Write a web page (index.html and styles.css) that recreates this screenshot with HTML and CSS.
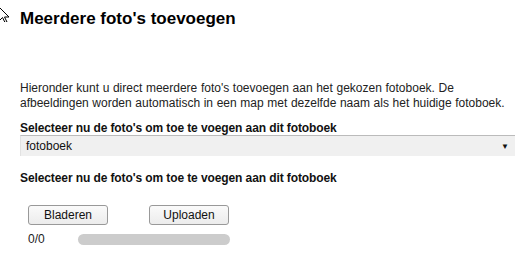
FILE: index.html
```html
<!DOCTYPE html>
<html>
<head>
<meta charset="utf-8">
<link rel="stylesheet" href="styles.css">
</head>
<body>
<svg class="cursor" width="12" height="18" viewBox="0 0 12 18"><path d="M-3 1 L9 13 L4.5 13 L7 18 L5 18.5 L2.5 13.5 L-1 17" fill="#fff" stroke="#000" stroke-width="1"/></svg>
<div class="page">
  <h1 class="title">Meerdere foto's toevoegen</h1>
  <p class="intro">Hieronder kunt u direct meerdere foto's toevoegen aan het gekozen fotoboek. De afbeeldingen worden automatisch in een map met dezelfde naam als het huidige fotoboek.</p>
  <div class="label">Selecteer nu de foto's om toe te voegen aan dit fotoboek</div>
  <div class="select"><span>fotoboek</span><span class="arrow">&#9660;</span></div>
  <div class="label second">Selecteer nu de foto's om toe te voegen aan dit fotoboek</div>
  <div class="buttons">
    <button class="btn">Bladeren</button>
    <button class="btn">Uploaden</button>
  </div>
  <div class="progress-row">
    <span class="count">0/0</span>
    <div class="bar"></div>
  </div>
</div>
</body>
</html>
```
FILE: styles.css
```css
html, body { margin: 0; padding: 0; background: #fff; }
body { font-family: "Liberation Sans", Arial, sans-serif; color: #111; }
.cursor { position: absolute; left: 0; top: 4px; }
.page { padding: 9px 14px 0 20px; }
.title { font-size: 17px; font-weight: bold; margin: 0; line-height: 20px; color: #000; }
.intro { font-size: 12px; line-height: 15px; margin: 52px 0 0 0; color: #222; word-spacing: 0.3px; }
.label { font-size: 12px; font-weight: bold; line-height: 14px; margin-top: 10px; color: #111; letter-spacing: -0.1px; }
.select { margin-top: 0; height: 20px; background: #f0f0f0; border-top: 1px solid #bbb; border-left: 1px solid #e2e2e2; display: flex; align-items: center; justify-content: space-between; padding: 0 6px 0 5px; font-size: 12px; color: #111; }
.arrow { font-size: 8px; }
.second { margin-top: 15px; }
.buttons { display: flex; gap: 41px; margin-top: 20px; padding-left: 8px; }
.btn { width: 80px; height: 20px; font-family: "Liberation Sans", Arial, sans-serif; font-size: 12px; background: linear-gradient(#fafafa, #ececec); border: 1px solid #999; border-radius: 3px; padding: 0; color: #111; }
.progress-row { display: flex; align-items: center; padding-left: 8px; margin-top: 7px; }
.count { font-size: 12px; width: 50px; color: #222; }
.bar { width: 152px; height: 11px; border-radius: 6px; background: #ccc; }
```
